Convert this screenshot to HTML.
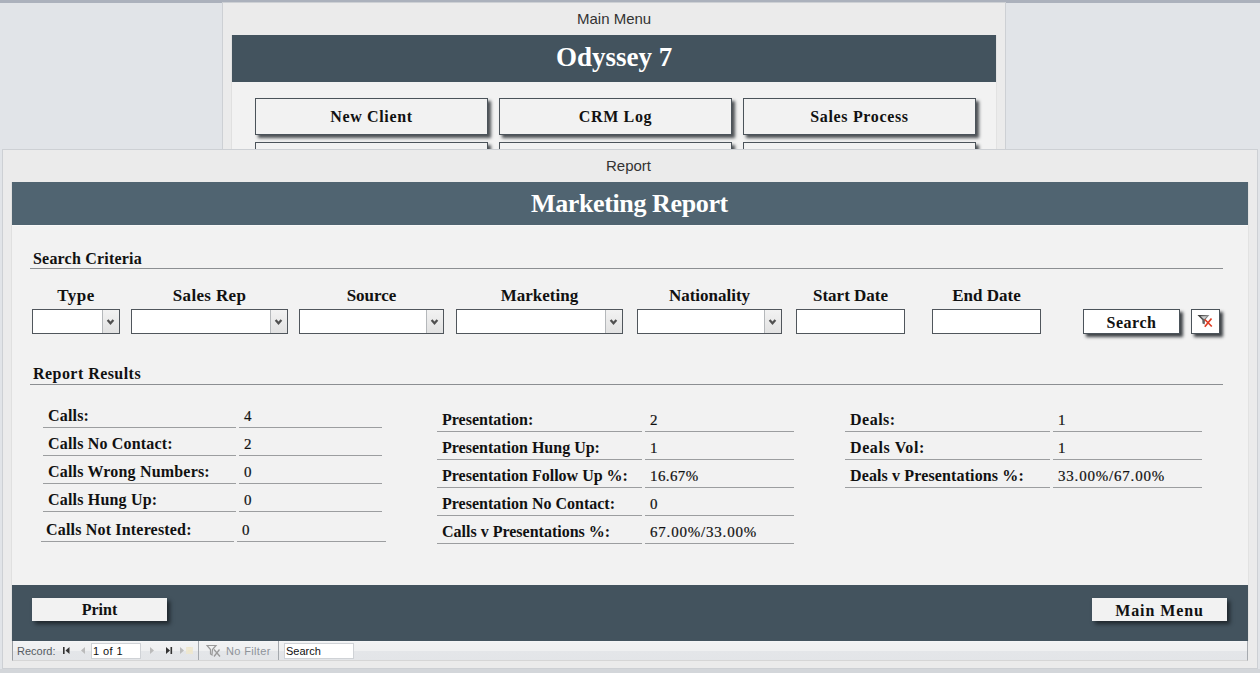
<!DOCTYPE html>
<html><head><meta charset="utf-8">
<style>
*{margin:0;padding:0;box-sizing:border-box}
html,body{width:1260px;height:673px;overflow:hidden;background:#e1e4e8;position:relative;font-family:"Liberation Serif",serif}
.a{position:absolute;white-space:nowrap}
.win{background:#ebebeb;border:1px solid #cdd0d4}
.wtitle{font-family:"Liberation Sans",sans-serif;font-size:15px;color:#333}
.hdr{background:#43535e}
.body{background:#f2f2f2}
.btn{background:#f2f2f2;border:1px solid #4b535a;box-shadow:3px 3px 3px rgba(35,40,45,.8);font-weight:bold;font-size:16px;color:#111;text-align:center}
.rl{font-size:16px;font-weight:bold;color:#111;letter-spacing:.18px}
.rv{font-size:15px;color:#111;-webkit-text-stroke:.2px #111}
.ln{height:1px;background:#9c9ea0}
.sec{font-size:16px;font-weight:bold;color:#111}
.lbl{font-size:17px;font-weight:bold;color:#111;text-align:center}
.cb{height:25px;background:#fff;border:1px solid #50565c}
.cb i{position:absolute;right:0;top:0;width:17px;height:23px;background:linear-gradient(#f2f2f2,#e2e2e2);border-left:1px solid #b5b8bb}
.cb svg{position:absolute;left:0;top:0}
.nav{background:linear-gradient(#f6f7f8 0,#f1f2f3 8%,#eff0f1 50%,#e4e6e9 52%,#e3e5e8 100%);border-left:1px solid #9a9ea3}
.ns{font-family:"Liberation Sans",sans-serif;font-size:11px}
</style></head><body>
<div class="a" style="left:0;top:0;width:1260px;height:3px;background:#abb1bc"></div>

<!-- Main menu window -->
<div class="a win" style="left:222px;top:2px;width:784px;height:160px"></div>
<div class="a wtitle" style="left:577px;top:10px">Main Menu</div>
<div class="a body" style="left:232px;top:35px;width:764px;height:120px"></div><div class="a" style="left:231px;top:35px;width:1px;height:114px;background:#e0e0e0"></div><div class="a" style="left:996px;top:35px;width:1px;height:114px;background:#e2e2e2"></div>
<div class="a hdr" style="left:232px;top:35px;width:764px;height:47px"></div>
<div class="a" style="left:556px;top:42px;font-size:27px;font-weight:bold;color:#fff">Odyssey 7</div>
<div class="a btn" style="left:255px;top:98px;width:233px;height:37px;line-height:35px;letter-spacing:.65px">New Client</div>
<div class="a btn" style="left:499px;top:98px;width:233px;height:37px;line-height:35px;letter-spacing:.65px">CRM Log</div>
<div class="a btn" style="left:743px;top:98px;width:233px;height:37px;line-height:35px;letter-spacing:.65px">Sales Process</div>
<div class="a btn" style="left:255px;top:142px;width:233px;height:37px"></div>
<div class="a btn" style="left:499px;top:142px;width:233px;height:37px"></div>
<div class="a btn" style="left:743px;top:142px;width:233px;height:37px"></div>

<!-- Report window -->
<div class="a win" style="left:2px;top:149px;width:1256px;height:520px"></div>
<div class="a wtitle" style="left:606px;top:157px">Report</div>
<div class="a body" style="left:12px;top:182px;width:1236px;height:403px"></div><div class="a" style="left:11px;top:182px;width:1px;height:459px;background:#e0e0e0"></div><div class="a" style="left:1248px;top:182px;width:1px;height:459px;background:#e2e2e2"></div><div class="a" style="left:12px;top:225px;width:1236px;height:1px;background:#f8f8f8"></div>
<div class="a" style="left:12px;top:182px;width:1236px;height:43px;background:#506471"></div>
<div class="a" style="left:531px;top:189px;font-size:26px;font-weight:bold;color:#fff;letter-spacing:-.38px">Marketing Report</div>
<div class="a hdr" style="left:12px;top:585px;width:1236px;height:56px"></div>

<!-- Search criteria -->
<div class="a sec" style="left:33px;top:250px;letter-spacing:.2px">Search Criteria</div>
<div class="a" style="left:30px;top:268px;width:1193px;height:1px;background:#8c8f92"></div>

<div class="a lbl" style="left:32px;width:88px;top:286px;letter-spacing:.5px">Type</div>
<div class="a lbl" style="left:131px;width:157px;top:286px;letter-spacing:.35px">Sales Rep</div>
<div class="a lbl" style="left:299px;width:145px;top:286px">Source</div>
<div class="a lbl" style="left:456px;width:167px;top:286px">Marketing</div>
<div class="a lbl" style="left:637px;width:145px;top:286px">Nationality</div>
<div class="a lbl" style="left:796px;width:109px;top:286px">Start Date</div>
<div class="a lbl" style="left:932px;width:109px;top:286px">End Date</div>

<div class="a cb" style="left:32px;top:309px;width:88px"><i><svg width="17" height="23"><polyline points="4.6,10 7.5,13.3 10.4,10" fill="none" stroke="#505050" stroke-width="2.2"/></svg></i></div>
<div class="a cb" style="left:131px;top:309px;width:157px"><i><svg width="17" height="23"><polyline points="4.6,10 7.5,13.3 10.4,10" fill="none" stroke="#505050" stroke-width="2.2"/></svg></i></div>
<div class="a cb" style="left:299px;top:309px;width:145px"><i><svg width="17" height="23"><polyline points="4.6,10 7.5,13.3 10.4,10" fill="none" stroke="#505050" stroke-width="2.2"/></svg></i></div>
<div class="a cb" style="left:456px;top:309px;width:167px"><i><svg width="17" height="23"><polyline points="4.6,10 7.5,13.3 10.4,10" fill="none" stroke="#505050" stroke-width="2.2"/></svg></i></div>
<div class="a cb" style="left:637px;top:309px;width:145px"><i><svg width="17" height="23"><polyline points="4.6,10 7.5,13.3 10.4,10" fill="none" stroke="#505050" stroke-width="2.2"/></svg></i></div>
<div class="a cb" style="left:796px;top:309px;width:109px"></div>
<div class="a cb" style="left:932px;top:309px;width:109px"></div>

<div class="a btn" style="left:1083px;top:309px;width:97px;height:25px;line-height:26px;background:#fff;letter-spacing:.5px;box-shadow:3px 3px 3px rgba(30,35,40,.85)">Search</div>
<div class="a btn" style="left:1191px;top:309px;width:29px;height:25px;background:#fff;box-shadow:3px 3px 3px rgba(30,35,40,.85)"><svg width="27" height="23" style="position:absolute;left:0;top:0">
<defs><linearGradient id="fg" x1="0" x2="1" y1="0" y2="0"><stop offset="0" stop-color="#2a2a2a"/><stop offset="1" stop-color="#9a9a9a"/></linearGradient></defs>
<path d="M5.5,5 L17.5,5 L13,10 L12.8,14.5 L10.5,13.5 L10.3,10 Z" fill="url(#fg)"/>
<path d="M8.5,6.3 L15,6.3 L12.2,9.2 Z" fill="#cfcfcf"/>
<path d="M12.8,9.5 L19.8,16.5 M19.5,8.5 L12.8,16.8" stroke="#de3b22" stroke-width="1.7" fill="none"/>
</svg></div>

<!-- Report results -->
<div class="a sec" style="left:33px;top:365px;letter-spacing:.45px">Report Results</div>
<div class="a" style="left:30px;top:384px;width:1193px;height:1px;background:#8c8f92"></div>
<div class="a rl" style="left:48px;top:407px">Calls:</div><div class="a ln" style="left:43px;top:427px;width:193px"></div><div class="a rv" style="left:244px;top:408px">4</div><div class="a ln" style="left:239px;top:427px;width:143px"></div>
<div class="a rl" style="left:48px;top:435px">Calls No Contact:</div><div class="a ln" style="left:43px;top:455px;width:193px"></div><div class="a rv" style="left:244px;top:436px">2</div><div class="a ln" style="left:239px;top:455px;width:143px"></div>
<div class="a rl" style="left:48px;top:463px">Calls Wrong Numbers:</div><div class="a ln" style="left:43px;top:483px;width:193px"></div><div class="a rv" style="left:244px;top:464px">0</div><div class="a ln" style="left:239px;top:483px;width:143px"></div>
<div class="a rl" style="left:48px;top:491px">Calls Hung Up:</div><div class="a ln" style="left:43px;top:511px;width:193px"></div><div class="a rv" style="left:244px;top:492px">0</div><div class="a ln" style="left:239px;top:511px;width:143px"></div>
<div class="a rl" style="left:46px;top:521px">Calls Not Interested:</div><div class="a ln" style="left:41px;top:541px;width:193px"></div><div class="a rv" style="left:242px;top:522px">0</div><div class="a ln" style="left:237px;top:541px;width:149px"></div>
<div class="a rl" style="letter-spacing:0;left:442px;top:411px">Presentation:</div><div class="a ln" style="left:437px;top:431px;width:205px"></div><div class="a rv" style="left:650px;top:412px;">2</div><div class="a ln" style="left:645px;top:431px;width:149px"></div>
<div class="a rl" style="letter-spacing:0;left:442px;top:439px">Presentation Hung Up:</div><div class="a ln" style="left:437px;top:459px;width:205px"></div><div class="a rv" style="left:650px;top:440px;">1</div><div class="a ln" style="left:645px;top:459px;width:149px"></div>
<div class="a rl" style="letter-spacing:0;left:442px;top:467px">Presentation Follow Up %:</div><div class="a ln" style="left:437px;top:487px;width:205px"></div><div class="a rv" style="left:650px;top:468px;letter-spacing:.4px">16.67%</div><div class="a ln" style="left:645px;top:487px;width:149px"></div>
<div class="a rl" style="letter-spacing:0;left:442px;top:495px">Presentation No Contact:</div><div class="a ln" style="left:437px;top:515px;width:205px"></div><div class="a rv" style="left:650px;top:496px;">0</div><div class="a ln" style="left:645px;top:515px;width:149px"></div>
<div class="a rl" style="letter-spacing:0;left:442px;top:523px">Calls v Presentations %:</div><div class="a ln" style="left:437px;top:543px;width:205px"></div><div class="a rv" style="left:650px;top:524px;letter-spacing:.8px">67.00%/33.00%</div><div class="a ln" style="left:645px;top:543px;width:149px"></div>
<div class="a rl" style="letter-spacing:.5px;left:850px;top:411px">Deals:</div><div class="a ln" style="left:845px;top:431px;width:205px"></div><div class="a rv" style="left:1058px;top:412px;">1</div><div class="a ln" style="left:1053px;top:431px;width:149px"></div>
<div class="a rl" style="letter-spacing:.6px;left:850px;top:439px">Deals Vol:</div><div class="a ln" style="left:845px;top:459px;width:205px"></div><div class="a rv" style="left:1058px;top:440px;">1</div><div class="a ln" style="left:1053px;top:459px;width:149px"></div>
<div class="a rl" style="letter-spacing:.13px;left:850px;top:467px">Deals v Presentations %:</div><div class="a ln" style="left:845px;top:487px;width:205px"></div><div class="a rv" style="left:1058px;top:468px;letter-spacing:.8px">33.00%/67.00%</div><div class="a ln" style="left:1053px;top:487px;width:149px"></div>

<!-- footer buttons -->
<div class="a btn" style="left:32px;top:598px;width:135px;height:23px;line-height:23px;border:none;box-shadow:3px 3px 4px rgba(20,25,30,.75)">Print</div>
<div class="a btn" style="left:1092px;top:598px;width:135px;height:23px;line-height:25px;border:none;letter-spacing:.9px;box-shadow:3px 3px 4px rgba(20,25,30,.75)">Main Menu</div>

<!-- nav -->
<div class="a" style="left:0;top:669px;width:1260px;height:4px;background:#d3d6da"></div>
<div class="a nav" style="left:12px;top:641px;width:1236px;height:20px;border-right:1px solid #a6aaaf;border-bottom:1px solid #d6d6d6"></div>
<div class="a ns" style="left:17px;top:645px;color:#555b62">Record:</div>
<svg class="a" style="left:60px;top:644px" width="140" height="14">
<rect x="3" y="3" width="1.6" height="7" fill="#333"/><path d="M9.5,3 L5.5,6.5 L9.5,10 Z" fill="#333"/>
<path d="M25,3 L21,6.5 L25,10 Z" fill="#bbb"/>
<path d="M90,3 L94,6.5 L90,10 Z" fill="#bbb"/>
<path d="M106,3 L110,6.5 L106,10 Z" fill="#333"/><rect x="110.5" y="3" width="1.6" height="7" fill="#333"/>
<path d="M120,3 L124,6.5 L120,10 Z" fill="#bbb"/>
<path d="M127,4 L131,4 L131,3 L128,3 Z M128,6 L132,6 L132,8 L128,8 Z" fill="#efe6c8"/><rect x="126" y="3" width="7" height="7" fill="#efe7cc" opacity=".8"/>
</svg>
<div class="a" style="left:91px;top:643px;width:50px;height:16px;background:#fff;border:1px solid #cfd2d6"></div>
<div class="a ns" style="left:93px;top:645px;color:#111;letter-spacing:.4px">1 of 1</div>
<div class="a" style="left:198px;top:641px;width:1px;height:19px;background:#a4a8ad"></div>
<svg class="a" style="left:206px;top:644px" width="16" height="14">
<path d="M1,1.5 L10,1.5 L6.5,5.5 L6,11 L4.5,10 L4.5,5.5 Z" fill="none" stroke="#9a9a9a" stroke-width="1.2"/>
<path d="M8,5.5 L14,12.5 M13.5,5.5 L8,12.5" stroke="#9a9a9a" stroke-width="1.3"/>
</svg>
<div class="a ns" style="left:226px;top:645px;color:#8e939a;letter-spacing:.35px">No Filter</div>
<div class="a" style="left:278px;top:641px;width:1px;height:19px;background:#a4a8ad"></div>
<div class="a" style="left:284px;top:643px;width:70px;height:16px;background:#fff;border:1px solid #cfd2d6"></div>
<div class="a ns" style="left:286px;top:645px;color:#111">Search</div>
</body></html>
